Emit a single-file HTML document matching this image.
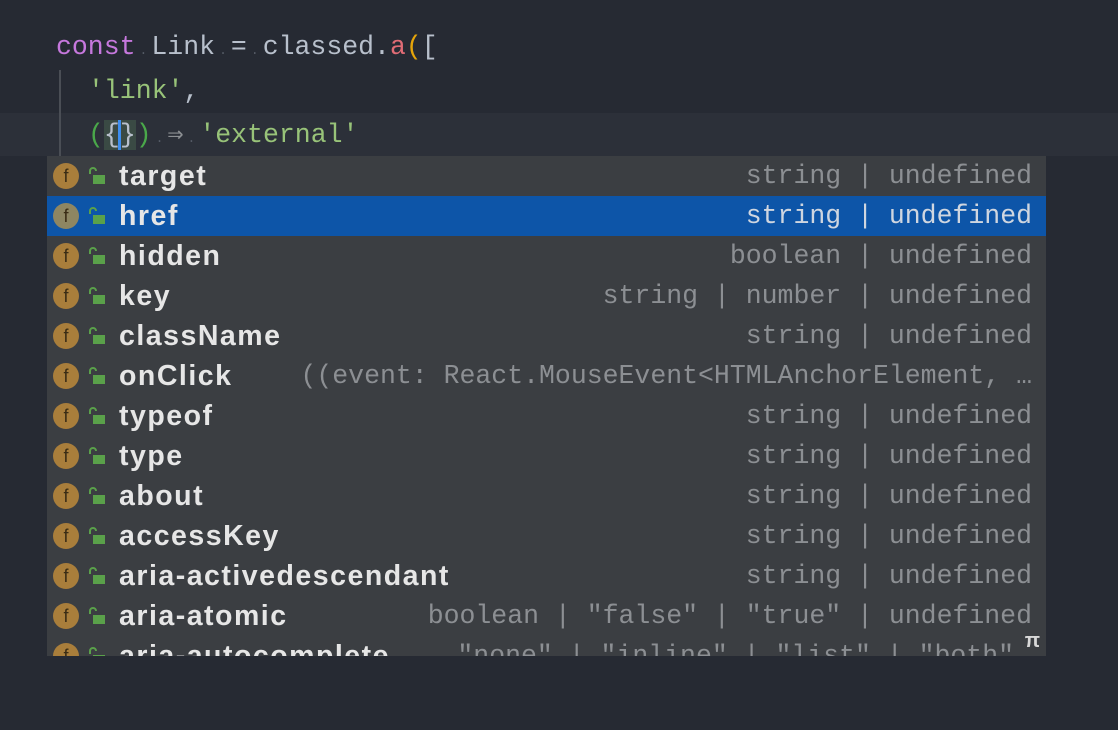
<!DOCTYPE html>
<html><head><style>
body{margin:0;width:1118px;height:730px;background:#262a33;position:relative;overflow:hidden;font-family:"Liberation Mono","DejaVu Sans Mono",monospace;}
.code{position:absolute;left:56px;font-size:26.5px;color:#b8c0cc;white-space:pre;line-height:44px;}
.dot{display:inline-block;width:15.9px;text-align:center;color:#555b66;font-size:13px;}
.hl{position:absolute;left:0;top:113px;width:1118px;height:43px;background:#2c3039;}
.guide{position:absolute;left:59px;top:70px;width:2px;height:86px;background:#4a4e55;}
.pop{position:absolute;left:47px;top:156px;width:999px;height:500px;background:#3b3e42;overflow:hidden;}
.row{position:absolute;left:0;width:999px;height:40px;}
.sel{background:#0d55a8;}
.ic{position:absolute;left:6px;top:7px;width:26px;height:26px;border-radius:50%;background:#a97e3b;color:#3a2c14;font-family:"Liberation Sans",sans-serif;font-size:18px;text-align:center;line-height:26px;}
.sel .ic{background:#8e8662;}
.lk{position:absolute;left:40px;top:10px;}
.nm{position:absolute;left:72px;top:0;line-height:40px;font-family:"Liberation Sans",sans-serif;font-weight:bold;font-size:28.5px;letter-spacing:1.5px;color:#e6e6e6;}
.tp{position:absolute;right:14px;top:0;line-height:40px;font-size:26.5px;color:#8c8f93;white-space:pre;}
.sel .tp{color:#cfd6e0;}
</style></head><body>
<div class="hl"></div>
<div class="guide"></div>
<div class="code" style="top:25px"><span style="color:#c678dd">const</span><span class="dot">.</span>Link<span class="dot">.</span>=<span class="dot">.</span>classed.<span style="color:#e06c75">a</span><span style="color:#e5a50a">(</span>[</div>
<div class="code" style="top:69px;left:88px;color:#98c379">'link'<span style="color:#b8c0cc">,</span></div>
<div class="code" style="top:113px;left:88px"><span style="color:#4aa84a">(</span><span style="background:#3a4a44">{<span style="display:inline-block;width:3px;height:30px;background:#3d8ef0;vertical-align:middle;margin:0 -1.5px"></span>}</span><span style="color:#4aa84a">)</span><span class="dot">.</span><span style="color:#8c8f93">⇒</span><span class="dot">.</span><span style="color:#98c379">'external'</span></div>
<div class="pop">
<div class="row" style="top:0"><div class="ic">f</div><svg class="lk" width="20" height="20"><path d="M3 8V5a3 3 0 0 1 6 0" stroke="#5aa14a" stroke-width="2" fill="none"/><rect x="6" y="9" width="12" height="9" fill="#5aa14a"/></svg><div class="nm">target</div><div class="tp">string | undefined</div></div>
<div class="row sel" style="top:40px"><div class="ic">f</div><svg class="lk" width="20" height="20"><path d="M3 8V5a3 3 0 0 1 6 0" stroke="#5aa14a" stroke-width="2" fill="none"/><rect x="6" y="9" width="12" height="9" fill="#5aa14a"/></svg><div class="nm">href</div><div class="tp">string | undefined</div></div>
<div class="row" style="top:80px"><div class="ic">f</div><svg class="lk" width="20" height="20"><path d="M3 8V5a3 3 0 0 1 6 0" stroke="#5aa14a" stroke-width="2" fill="none"/><rect x="6" y="9" width="12" height="9" fill="#5aa14a"/></svg><div class="nm">hidden</div><div class="tp">boolean | undefined</div></div>
<div class="row" style="top:120px"><div class="ic">f</div><svg class="lk" width="20" height="20"><path d="M3 8V5a3 3 0 0 1 6 0" stroke="#5aa14a" stroke-width="2" fill="none"/><rect x="6" y="9" width="12" height="9" fill="#5aa14a"/></svg><div class="nm">key</div><div class="tp">string | number | undefined</div></div>
<div class="row" style="top:160px"><div class="ic">f</div><svg class="lk" width="20" height="20"><path d="M3 8V5a3 3 0 0 1 6 0" stroke="#5aa14a" stroke-width="2" fill="none"/><rect x="6" y="9" width="12" height="9" fill="#5aa14a"/></svg><div class="nm">className</div><div class="tp">string | undefined</div></div>
<div class="row" style="top:200px"><div class="ic">f</div><svg class="lk" width="20" height="20"><path d="M3 8V5a3 3 0 0 1 6 0" stroke="#5aa14a" stroke-width="2" fill="none"/><rect x="6" y="9" width="12" height="9" fill="#5aa14a"/></svg><div class="nm">onClick</div><div class="tp">((event: React.MouseEvent&lt;HTMLAnchorElement, …</div></div>
<div class="row" style="top:240px"><div class="ic">f</div><svg class="lk" width="20" height="20"><path d="M3 8V5a3 3 0 0 1 6 0" stroke="#5aa14a" stroke-width="2" fill="none"/><rect x="6" y="9" width="12" height="9" fill="#5aa14a"/></svg><div class="nm">typeof</div><div class="tp">string | undefined</div></div>
<div class="row" style="top:280px"><div class="ic">f</div><svg class="lk" width="20" height="20"><path d="M3 8V5a3 3 0 0 1 6 0" stroke="#5aa14a" stroke-width="2" fill="none"/><rect x="6" y="9" width="12" height="9" fill="#5aa14a"/></svg><div class="nm">type</div><div class="tp">string | undefined</div></div>
<div class="row" style="top:320px"><div class="ic">f</div><svg class="lk" width="20" height="20"><path d="M3 8V5a3 3 0 0 1 6 0" stroke="#5aa14a" stroke-width="2" fill="none"/><rect x="6" y="9" width="12" height="9" fill="#5aa14a"/></svg><div class="nm">about</div><div class="tp">string | undefined</div></div>
<div class="row" style="top:360px"><div class="ic">f</div><svg class="lk" width="20" height="20"><path d="M3 8V5a3 3 0 0 1 6 0" stroke="#5aa14a" stroke-width="2" fill="none"/><rect x="6" y="9" width="12" height="9" fill="#5aa14a"/></svg><div class="nm">accessKey</div><div class="tp">string | undefined</div></div>
<div class="row" style="top:400px"><div class="ic">f</div><svg class="lk" width="20" height="20"><path d="M3 8V5a3 3 0 0 1 6 0" stroke="#5aa14a" stroke-width="2" fill="none"/><rect x="6" y="9" width="12" height="9" fill="#5aa14a"/></svg><div class="nm">aria-activedescendant</div><div class="tp">string | undefined</div></div>
<div class="row" style="top:440px"><div class="ic">f</div><svg class="lk" width="20" height="20"><path d="M3 8V5a3 3 0 0 1 6 0" stroke="#5aa14a" stroke-width="2" fill="none"/><rect x="6" y="9" width="12" height="9" fill="#5aa14a"/></svg><div class="nm">aria-atomic</div><div class="tp">boolean | "false" | "true" | undefined</div></div>
<div class="row" style="top:480px"><div class="ic">f</div><svg class="lk" width="20" height="20"><path d="M3 8V5a3 3 0 0 1 6 0" stroke="#5aa14a" stroke-width="2" fill="none"/><rect x="6" y="9" width="12" height="9" fill="#5aa14a"/></svg><div class="nm">aria-autocomplete</div><div class="tp" style="right:32px">"none" | "inline" | "list" | "both"</div></div>
<div style="position:absolute;right:6px;top:474px;color:#d8d8d8;font-family:'Liberation Sans',sans-serif;font-weight:bold;font-size:20px;background:#3b3e42;">π</div>
</div>
</body></html>
